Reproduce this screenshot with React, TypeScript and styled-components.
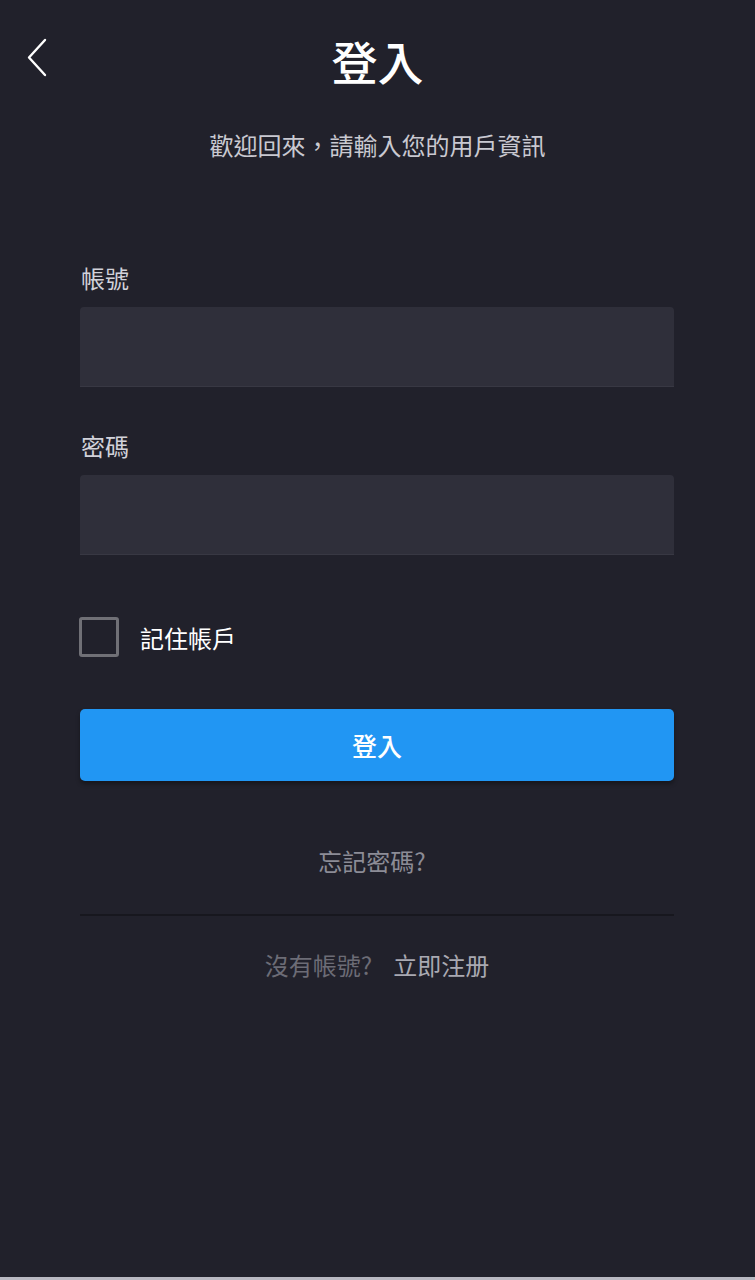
import styled, { createGlobalStyle } from 'styled-components'
import { useState } from 'react'

const GlobalStyle = createGlobalStyle`
  html, body {
    margin: 0;
    padding: 0;
    background: #21212b;
  }
  body {
    font-family: "Noto Sans CJK TC", "Noto Sans", sans-serif;
  }
`

const Page = styled.div`
  min-height: 1277px;
  background: #21212b;
  border-bottom: 3px solid #b9b9c2;
  display: flex;
  flex-direction: column;
`

const Header = styled.header`
  display: grid;
  grid-template-columns: 80px 1fr 80px;
  align-items: center;
  height: 126px;
`

const BackButton = styled.button`
  background: none;
  border: none;
  padding: 0 0 0 26px;
  height: 40px;
  display: flex;
  align-items: center;
  cursor: pointer;
  margin-top: -10px;
`

const Title = styled.h1`
  margin: 0;
  text-align: center;
  color: #ffffff;
  font-size: 46px;
  font-weight: 500;
  line-height: 1;
  margin-top: -6px;
`

const Subtitle = styled.p`
  margin: 7px 0 0;
  text-align: center;
  color: #c9c9d1;
  font-size: 24px;
  line-height: 1;
`

const Form = styled.form`
  display: flex;
  flex-direction: column;
  padding: 0 81px 0 80px;
  margin-top: 109px;
`

const Label = styled.label`
  color: #d2d2da;
  font-size: 24px;
  line-height: 1;
  margin-bottom: 17px;
  padding-left: 1px;
`

const Input = styled.input<{ $gap?: number }>`
  height: 80px;
  box-sizing: border-box;
  background: #2f2f3a;
  border: none;
  border-bottom: 1px solid #383843;
  border-radius: 4px 4px 0 0;
  color: #fff;
  font-size: 22px;
  padding: 0 16px;
  font-family: inherit;
  outline: none;
  margin-bottom: ${p => p.$gap ?? 0}px;
`

const CheckRow = styled.label`
  display: flex;
  align-items: center;
  gap: 21px;
  margin-top: 62px;
  cursor: pointer;
`

const Box = styled.span<{ $checked: boolean }>`
  width: 40px;
  height: 40px;
  box-sizing: border-box;
  border: 3px solid #707076;
  border-radius: 3px;
  margin-left: -1px;
  background: ${p => (p.$checked ? '#2196f3' : 'transparent')};
`

const CheckText = styled.span`
  color: #ffffff;
  font-size: 24px;
`

const SubmitButton = styled.button`
  margin-top: 52px;
  height: 72px;
  border: none;
  border-radius: 5px;
  background: #2196f3;
  color: #ffffff;
  font-size: 25px;
  font-weight: 500;
  font-family: inherit;
  box-shadow: 0 3px 4px rgba(0, 0, 0, 0.35);
  cursor: pointer;
`

const Forgot = styled.a`
  align-self: center;
  margin-top: 68px;
  margin-right: 10px;
  color: #8c8c96;
  font-size: 24px;
  line-height: 1;
`

const Divider = styled.hr`
  width: 100%;
  margin: 41px 0 0;
  border: none;
  border-top: 2px solid #17171e;
`

const Footer = styled.div`
  display: flex;
  justify-content: center;
  gap: 21px;
  margin-top: 37px;
  font-size: 24px;
  line-height: 1;
`

const Muted = styled.span`
  color: #6c6c76;
`

const Register = styled.a`
  color: #a9a9b2;
`

function App () {
  const [remember, setRemember] = useState(false)

  return (
    <Page>
      <GlobalStyle />
      <Header>
        <BackButton aria-label="返回">
          <svg width="22" height="40" viewBox="0 0 22 40" fill="none">
            <path d="M19 2 L3 19.5 L19 37" stroke="#ffffff" strokeWidth="2.4" strokeLinecap="round" strokeLinejoin="round" />
          </svg>
        </BackButton>
        <Title>登入</Title>
        <span />
      </Header>
      <Subtitle>歡迎回來，請輸入您的用戶資訊</Subtitle>
      <Form onSubmit={e => e.preventDefault()}>
        <Label>帳號</Label>
        <Input $gap={47} />
        <Label>密碼</Label>
        <Input type="password" />
        <CheckRow onClick={() => setRemember(!remember)}>
          <Box $checked={remember} />
          <CheckText>記住帳戶</CheckText>
        </CheckRow>
        <SubmitButton type="submit">登入</SubmitButton>
        <Forgot>忘記密碼?</Forgot>
        <Divider />
        <Footer>
          <Muted>沒有帳號?</Muted>
          <Register>立即注册</Register>
        </Footer>
      </Form>
    </Page>
  )
}

export default App
